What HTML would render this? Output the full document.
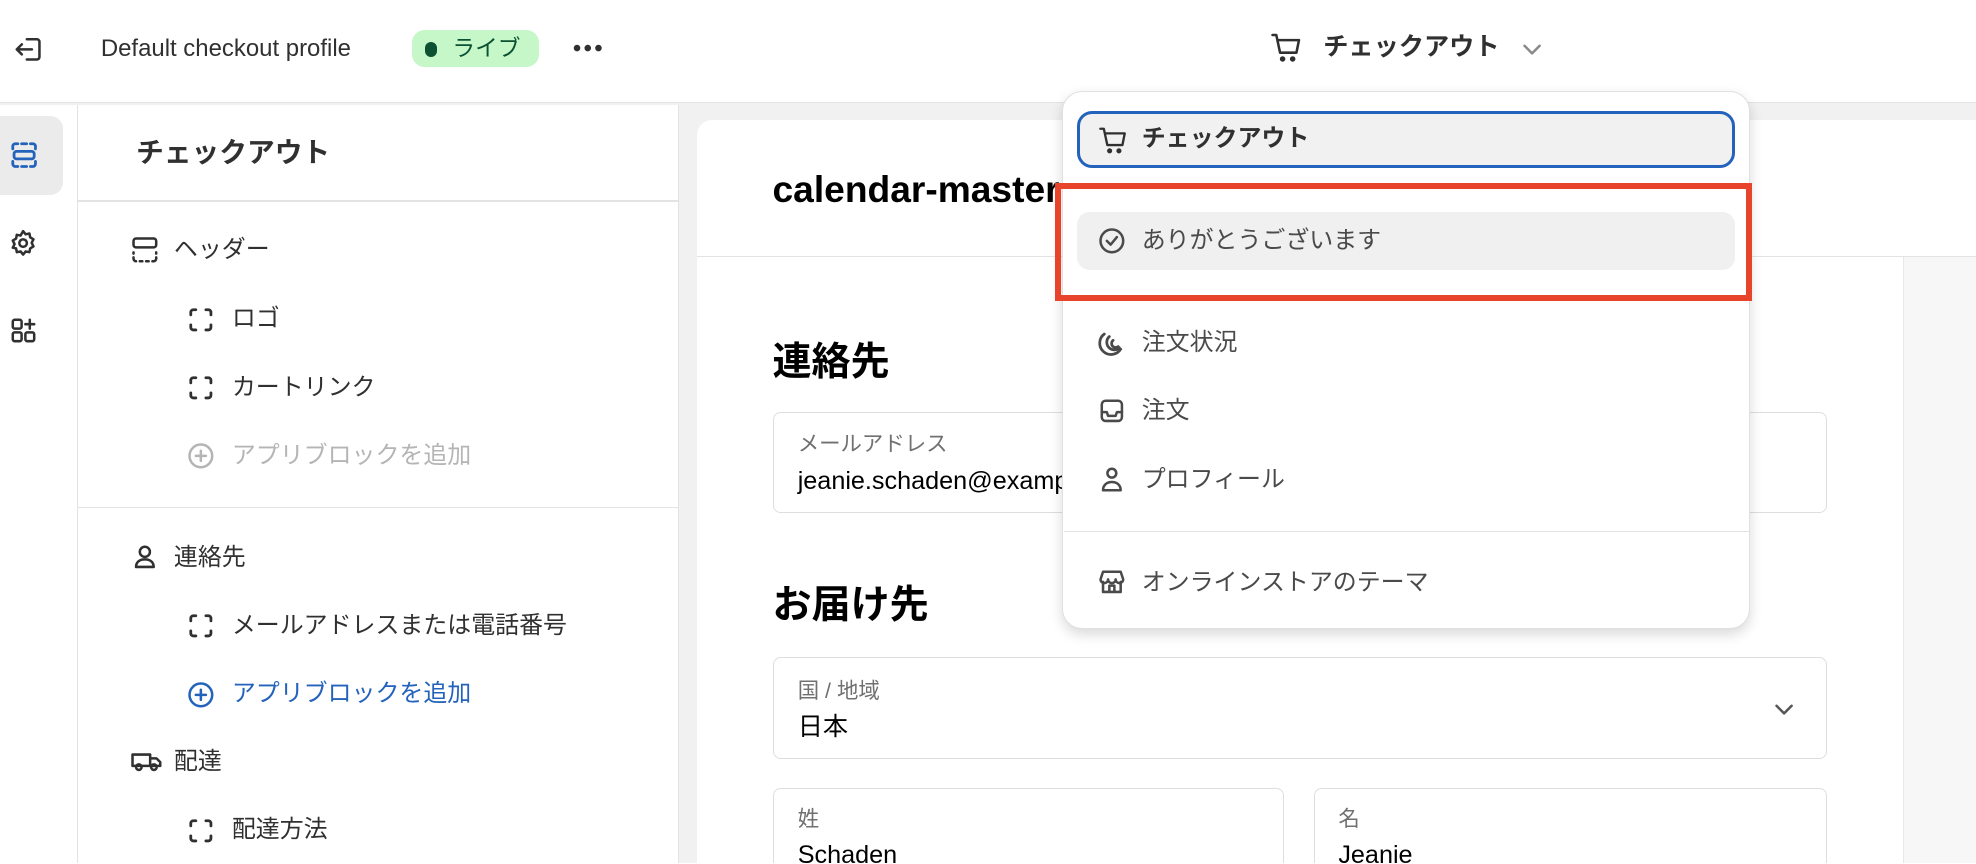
<!DOCTYPE html>
<html><head><meta charset="utf-8"><style>
*{box-sizing:border-box;margin:0;padding:0}
html,body{width:1976px;height:864px;overflow:hidden;background:#fff}
body{font-family:"Liberation Sans","Noto Sans CJK JP",sans-serif;color:#303030}
#w{position:absolute;left:0;top:0;width:1568px;height:685px;overflow:hidden;background:#f1f1f1;zoom:1.26020408}
.a{position:absolute}
.ic{position:absolute;fill:none;stroke:#303030;stroke-width:2;stroke-linecap:round;stroke-linejoin:round}
.t{position:absolute;white-space:nowrap;line-height:1}
</style></head><body><div id="w">
<div class="a" style="left:0;top:0;width:1568px;height:82px;background:#fff;border-bottom:1px solid #e3e3e3"></div>
<svg class="ic" style="left:10px;top:26px" width="26" height="26" viewBox="0 0 26 26"><path d="M11 5h8a2 2 0 0 1 2 2v12a2 2 0 0 1-2 2h-8"/><path d="M15 13H3M7 9l-4 4 4 4"/></svg>
<div class="t" style="left:80px;top:29px;font-size:19px;color:#303030">Default checkout profile</div>
<div class="a" style="left:327px;top:24px;width:101px;height:29px;background:#c6f7c8;border-radius:10px"></div>
<div class="a" style="left:337px;top:33px;width:10px;height:12px;border-radius:6px;background:#0c5132"></div>
<div class="t" style="left:359px;top:29px;font-size:18px;color:#0c5132">ライブ</div>
<svg class="a" style="left:454px;top:34px" width="26" height="8" viewBox="0 0 26 8"><circle cx="4" cy="4" r="2.6" fill="#303030"/><circle cx="12.5" cy="4" r="2.6" fill="#303030"/><circle cx="21" cy="4" r="2.6" fill="#303030"/></svg>
<svg class="ic" style="left:1008px;top:24px" width="26" height="28" viewBox="0 0 26 28"><path d="M2 4h3l3 14h13l2-10H6"/><circle cx="10" cy="23" r="1.2" fill="#303030"/><circle cx="18" cy="23" r="1.2" fill="#303030"/></svg>
<div class="t" style="left:1050px;top:28px;font-size:20px;font-weight:bold">チェックアウト</div>
<svg class="ic" style="left:1208px;top:33px;stroke:#8a8a8a" width="16" height="12" viewBox="0 0 16 12"><path d="M2 3l6 6 6-6"/></svg>
<div class="a" style="left:0;top:83px;width:62px;height:720px;background:#fff;border-right:1px solid #e3e3e3"></div>
<div class="a" style="left:0;top:92px;width:50px;height:63px;background:#ebebeb;border-radius:0 10px 10px 0"></div>
<svg class="ic" style="left:7px;top:111px;stroke:#2463bc;stroke-width:2.2" width="24" height="24" viewBox="0 0 24 24"><path d="M3 7V5a2 2 0 0 1 2-2h2M10 3h4M17 3h2a2 2 0 0 1 2 2v2M3 17v2a2 2 0 0 0 2 2h2M10 21h4M17 21h2a2 2 0 0 0 2-2v-2"/><rect x="4" y="9" width="16" height="6" rx="2"/></svg>
<svg class="ic" style="left:6px;top:181px" width="24" height="24" viewBox="0 0 24 24"><circle cx="12" cy="12" r="3"/><path d="M12 2.5l2 2.5 3-.6.6 3 2.6 1.6-1.4 2.8 1.4 2.8-2.6 1.6-.6 3-3-.6-2 2.5-2-2.5-3 .6-.6-3L3.8 15.6l1.4-2.8L3.8 10l2.6-1.6.6-3 3 .6z"/></svg>
<svg class="ic" style="left:7px;top:251px" width="24" height="24" viewBox="0 0 24 24"><rect x="3" y="3" width="7" height="7" rx="1.5"/><rect x="3" y="13" width="7" height="7" rx="1.5"/><rect x="13" y="13" width="7" height="7" rx="1.5"/><path d="M16.5 3v7M13 6.5h7"/></svg>
<div class="a" style="left:62px;top:83px;width:477px;height:720px;background:#fff;border-right:1px solid #e3e3e3"></div>
<div class="t" style="left:108px;top:110px;font-size:22px;font-weight:bold">チェックアウト</div>
<div class="a" style="left:62px;top:159px;width:476px;height:1px;background:#e3e3e3"></div>
<svg class="ic" style="left:104px;top:187px;stroke-width:2" width="22" height="22" viewBox="0 0 22 22"><rect x="2" y="2" width="18" height="7" rx="2"/><path d="M2 13v1M2 17v1a2 2 0 0 0 2 2M7 20h2M12 20h2M17 20h1a2 2 0 0 0 2-2v-1M20 14v-1"/></svg>
<div class="t" style="left:138px;top:189px;font-size:19px">ヘッダー</div>
<svg class="ic" style="left:148px;top:243px;stroke-width:2.2" width="22" height="22" viewBox="0 0 22 22"><path d="M3 7V5a2 2 0 0 1 2-2h2M15 3h2a2 2 0 0 1 2 2v2M3 15v2a2 2 0 0 0 2 2h2M15 19h2a2 2 0 0 0 2-2v-2"/></svg>
<div class="t" style="left:184px;top:244px;font-size:19px">ロゴ</div>
<svg class="ic" style="left:148px;top:297px;stroke-width:2.2" width="22" height="22" viewBox="0 0 22 22"><path d="M3 7V5a2 2 0 0 1 2-2h2M15 3h2a2 2 0 0 1 2 2v2M3 15v2a2 2 0 0 0 2 2h2M15 19h2a2 2 0 0 0 2-2v-2"/></svg>
<div class="t" style="left:184px;top:298px;font-size:19px">カートリンク</div>
<svg class="ic" style="left:148px;top:351px;stroke:#b5b5b5" width="22" height="22" viewBox="0 0 22 22"><circle cx="11" cy="11" r="9"/><path d="M11 7v8M7 11h8"/></svg>
<div class="t" style="left:184px;top:352px;font-size:19px;color:#b5b5b5">アプリブロックを追加</div>
<div class="a" style="left:62px;top:402px;width:476px;height:1px;background:#e3e3e3"></div>
<svg class="ic" style="left:104px;top:431px" width="22" height="22" viewBox="0 0 22 22"><circle cx="11" cy="7" r="4"/><path d="M4 19c0-4 3-6 7-6s7 2 7 6z"/></svg>
<div class="t" style="left:138px;top:433px;font-size:19px">連絡先</div>
<svg class="ic" style="left:148px;top:486px;stroke-width:2.2" width="22" height="22" viewBox="0 0 22 22"><path d="M3 7V5a2 2 0 0 1 2-2h2M15 3h2a2 2 0 0 1 2 2v2M3 15v2a2 2 0 0 0 2 2h2M15 19h2a2 2 0 0 0 2-2v-2"/></svg>
<div class="t" style="left:184px;top:487px;font-size:19px">メールアドレスまたは電話番号</div>
<svg class="ic" style="left:148px;top:540px;stroke:#2463bc" width="22" height="22" viewBox="0 0 22 22"><circle cx="11" cy="11" r="9"/><path d="M11 7v8M7 11h8"/></svg>
<div class="t" style="left:184px;top:541px;font-size:19px;color:#2463bc">アプリブロックを追加</div>
<svg class="ic" style="left:103px;top:593px" width="26" height="22" viewBox="0 0 26 22"><path d="M2 6h14v9H2zM16 9h5l3 3v3h-8"/><circle cx="7" cy="16" r="2.2"/><circle cx="19" cy="16" r="2.2"/></svg>
<div class="t" style="left:138px;top:595px;font-size:19px">配達</div>
<svg class="ic" style="left:148px;top:648px;stroke-width:2.2" width="22" height="22" viewBox="0 0 22 22"><path d="M3 7V5a2 2 0 0 1 2-2h2M15 3h2a2 2 0 0 1 2 2v2M3 15v2a2 2 0 0 0 2 2h2M15 19h2a2 2 0 0 0 2-2v-2"/></svg>
<div class="t" style="left:184px;top:649px;font-size:19px">配達方法</div>
<div class="a" style="left:553px;top:95px;width:1015px;height:710px;background:#fff;border-radius:12px 0 0 0"></div>
<div class="a" style="left:1510px;top:204px;width:58px;height:600px;background:#f7f7f7;border-left:1px solid #e8e8e8"></div>
<div class="a" style="left:553px;top:203px;width:1015px;height:1px;background:#e3e3e3"></div>
<div class="t" style="left:613px;top:136px;font-size:29.5px;font-weight:bold;color:#000">calendar-master</div>
<div class="t" style="left:613px;top:272px;font-size:31px;font-weight:bold;color:#000">連絡先</div>
<div class="a" style="left:613px;top:327px;width:837px;height:80px;border:1px solid #dedede;border-radius:6px"></div>
<div class="t" style="left:633px;top:344px;font-size:17px;color:#707070">メールアドレス</div>
<div class="t" style="left:633px;top:372px;font-size:20px;color:#000">jeanie.schaden@example.com</div>
<div class="t" style="left:613px;top:465px;font-size:31px;font-weight:bold;color:#000">お届け先</div>
<div class="a" style="left:613px;top:521px;width:837px;height:81px;border:1px solid #dedede;border-radius:6px"></div>
<div class="t" style="left:633px;top:540px;font-size:17px;color:#707070">国 / 地域</div>
<div class="t" style="left:633px;top:567px;font-size:20px;color:#000">日本</div>
<svg class="ic" style="left:1408px;top:557px;stroke:#555" width="16" height="12" viewBox="0 0 16 12"><path d="M2 3l6 6 6-6"/></svg>
<div class="a" style="left:613px;top:625px;width:406px;height:80px;border:1px solid #dedede;border-radius:6px"></div>
<div class="t" style="left:633px;top:642px;font-size:17px;color:#707070">姓</div>
<div class="t" style="left:633px;top:669px;font-size:20px;color:#000">Schaden</div>
<div class="a" style="left:1043px;top:625px;width:407px;height:80px;border:1px solid #dedede;border-radius:6px"></div>
<div class="t" style="left:1062px;top:642px;font-size:17px;color:#707070">名</div>
<div class="t" style="left:1062px;top:669px;font-size:20px;color:#000">Jeanie</div>
<div class="a" style="left:843px;top:72px;width:546px;height:427px;background:#fff;border-radius:16px;border:1px solid #e0e0e0;box-shadow:0 4px 10px rgba(0,0,0,.15)"></div>
<div class="a" style="left:855px;top:88px;width:522px;height:45px;background:#f1f1f1;border:2.5px solid #2463bc;border-radius:12px"></div>
<svg class="ic" style="left:871px;top:98px" width="24" height="26" viewBox="0 0 26 28"><path d="M2 4h3l3 14h13l2-10H6"/><circle cx="10" cy="23" r="1.2" fill="#303030"/><circle cx="18" cy="23" r="1.2" fill="#303030"/></svg>
<div class="t" style="left:906px;top:101px;font-size:19px;font-weight:bold;color:#303030">チェックアウト</div>
<div class="a" style="left:855px;top:168px;width:522px;height:46px;background:#f0f0f0;border-radius:10px"></div>
<svg class="ic" style="left:871px;top:180px;stroke:#4a4a4a" width="22" height="22" viewBox="0 0 22 22"><circle cx="11" cy="11" r="9"/><path d="M7 11l3 3 5-6"/></svg>
<div class="t" style="left:906px;top:182px;font-size:19px;color:#4a4a4a">ありがとうございます</div>
<div class="a" style="left:837px;top:145px;width:553px;height:94px;border:5px solid #e8432b"></div>
<svg class="ic" style="left:871px;top:261px;stroke:#4a4a4a;stroke-width:2.2" width="22" height="22" viewBox="0 0 22 22"><path d="M5 4a9 9 0 1 0 13 12"/><path d="M9 6a6 6 0 1 0 8 9"/><path d="M12 9a3 3 0 1 0 4 5"/></svg>
<div class="t" style="left:906px;top:263px;font-size:19px;color:#4a4a4a">注文状況</div>
<svg class="ic" style="left:871px;top:315px;stroke:#4a4a4a" width="22" height="22" viewBox="0 0 22 22"><rect x="3" y="3" width="16" height="16" rx="3"/><path d="M3 12h4l1 3h6l1-3h4"/></svg>
<div class="t" style="left:906px;top:317px;font-size:19px;color:#4a4a4a">注文</div>
<svg class="ic" style="left:871px;top:369px;stroke:#4a4a4a" width="22" height="22" viewBox="0 0 22 22"><circle cx="11" cy="6.5" r="3.5"/><path d="M4 20c0-4 3-6.5 7-6.5s7 2.5 7 6.5z"/></svg>
<div class="t" style="left:906px;top:371px;font-size:19px;color:#4a4a4a">プロフィール</div>
<div class="a" style="left:844px;top:421px;width:544px;height:1px;background:#e3e3e3"></div>
<svg class="ic" style="left:871px;top:451px;stroke:#4a4a4a" width="22" height="22" viewBox="0 0 22 22"><path d="M4 3h14l2 6a3 3 0 0 1-6 0 3 3 0 0 1-6 0 3 3 0 0 1-6 0z"/><path d="M4 11v8h14v-8M9 19v-5h4v5"/></svg>
<div class="t" style="left:906px;top:453px;font-size:19px;color:#4a4a4a">オンラインストアのテーマ</div>
</div></body></html>
